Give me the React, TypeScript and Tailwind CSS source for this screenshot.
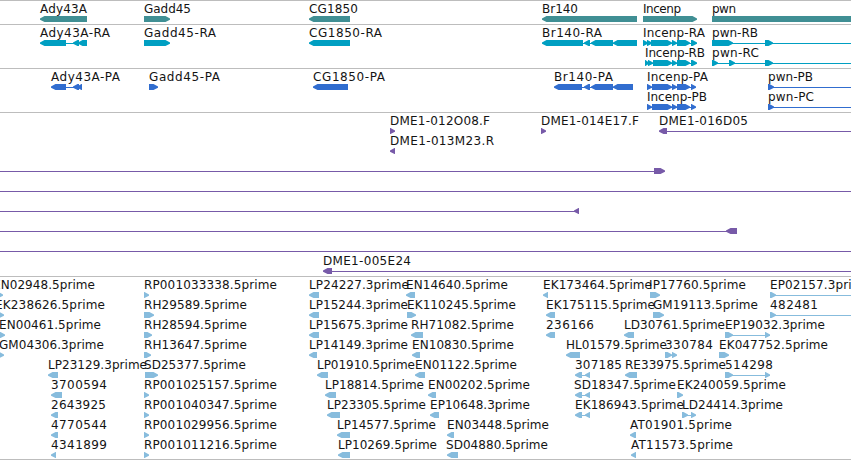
interface Feature {
  label?: string;
  x: number;
  width?: number;
  // exon blocks: [start, end]
  blocks: [number, number][];
  dir: 'L' | 'R' | 'N';
  // connector: [start, end]
  line?: [number, number];
}

interface TrackData {
  id: string;
  color: string;
  height: string;
  rows: Feature[][];
}

const f = (
  label: string,
  x: number,
  width: number,
  dir: Feature['dir'],
  blocks: [number, number][],
  line?: [number, number]
): Feature => ({ label, x, width, dir, blocks, line });

const END = 851;

const tracks: TrackData[] = [
  {
    id: 'genes',
    color: '#408f94',
    height: 'h-6',
    rows: [
      [
        f('Ady43A', 40, 47, 'L', [[40, 87]]),
        f('Gadd45', 144, 47, 'R', [[144, 170]]),
        f('CG1850', 309, 49, 'L', [[309, 350]]),
        f('Br140', 541, 37, 'L', [[542, 637]]),
        f('Incenp', 642, 39, 'R', [[643, 697]]),
        f('pwn', 711, 25, 'N', [[712, 851]]),
      ],
    ],
  },
  {
    id: 'transcripts',
    color: '#009fc2',
    height: 'h-11',
    rows: [
      [
        f('Ady43A-RA', 40, 70, 'L', [[40, 66], [73, 79], [78, 87]], [66, 80]),
        f('Gadd45-RA', 144, 72, 'R', [[144, 170]]),
        f('CG1850-RA', 309, 73, 'L', [[309, 350]]),
        f('Br140-RA', 541, 61, 'L', [[542, 583], [584, 590], [591, 613], [613, 637]], [582, 614]),
        f('Incenp-RA', 642, 63, 'R', [[643, 648], [647, 652], [651, 672], [672, 677], [677, 690], [691, 697]], [643, 694]),
        f('pwn-RB', 711, 47, 'R', [[712, 733], [765, 773]], [712, END]),
      ],
      [
        f('Incenp-RB', 644, 61, 'R', [[645, 649], [648, 653], [653, 672], [672, 677], [677, 690], [691, 697]], [645, 694]),
        f('pwn-RC', 711, 48, 'R', [[712, 718], [729, 735], [765, 773]], [712, END]),
      ],
    ],
  },
  {
    id: 'proteins',
    color: '#316dcf',
    height: 'h-11',
    rows: [
      [
        f('Ady43A-PA', 51, 69, 'L', [[51, 66], [73, 79], [77, 82]], [66, 80]),
        f('Gadd45-PA', 149, 71, 'R', [[149, 158]]),
        f('CG1850-PA', 313, 72, 'L', [[313, 348]]),
        f('Br140-PA', 553, 60, 'L', [[554, 582], [584, 590], [591, 613], [613, 633]], [582, 614]),
        f('Incenp-PA', 646, 62, 'R', [[647, 652], [652, 672], [672, 677], [677, 690], [691, 696]], [647, 694]),
        f('pwn-PB', 767, 46, 'R', [[768, 774]], [768, END]),
      ],
      [
        f('Incenp-PB', 646, 61, 'R', [[647, 652], [652, 672], [672, 677], [677, 690], [691, 696]], [647, 694]),
        f('pwn-PC', 767, 47, 'R', [[768, 774]], [768, END]),
      ],
    ],
  },
  {
    id: 'bacs',
    color: '#775aa8',
    height: 'h-[164px]',
    rows: [
      [
        f('DME1-012O08.F', 389, 101, 'R', [[390, 395]]),
        f('DME1-014E17.F', 540, 99, 'R', [[541, 546]]),
        f('DME1-016D05', 658, 90, 'L', [[659, 667]], [667, END]),
      ],
      [f('DME1-013M23.R', 389, 105, 'L', [[390, 395]])],
      [{ x: 0, dir: 'R', blocks: [[654, 665]], line: [0, 654] }],
      [{ x: 0, dir: 'R', blocks: [], line: [0, END] }],
      [{ x: 0, dir: 'L', blocks: [[574, 579]], line: [0, 576] }],
      [{ x: 0, dir: 'L', blocks: [[726, 737]], line: [0, 728] }],
      [{ x: 0, dir: 'R', blocks: [], line: [0, END] }],
      [f('DME1-005E24', 322, 89, 'L', [[323, 332]], [332, END])],
    ],
  },
  {
    id: 'ests',
    color: '#87bcdd',
    height: 'h-[183px]',
    rows: [
      [
        f('EN02948.5prime', -8, 103, 'R', [[-4, 3]]),
        f('RP001033338.5prime', 143, 134, 'R', [[144, 149]]),
        f('LP24227.3prime', 308, 101, 'L', [[309, 319]]),
        f('EN14640.5prime', 405, 103, 'L', [[406, 415]]),
        f('EK173464.5prime', 542, 110, 'L', [[543, 548]]),
        f('IP17760.5prime', 648, 98, 'R', [[650, 660]]),
        f('EP02157.3prime', 769, 102, 'R', [[770, 776]], [770, END]),
      ],
      [
        f('EK238626.5prime', -6, 111, 'R', [[-4, 4]]),
        f('RH29589.5prime', 143, 104, 'R', [[144, 154]]),
        f('LP15244.3prime', 308, 100, 'L', [[309, 319]]),
        f('EK110245.5prime', 406, 110, 'R', [[407, 416]]),
        f('EK175115.5prime', 545, 110, 'L', [[546, 555]]),
        f('GM19113.5prime', 653, 105, 'R', [[653, 664]]),
        f('482481', 770, 48, 'R', [[770, 776]], [770, END]),
      ],
      [
        f('EN00461.5prime', -2, 103, 'R', [[-4, 5]]),
        f('RH28594.5prime', 143, 104, 'R', [[144, 152]]),
        f('LP15675.3prime', 308, 100, 'L', [[309, 319]]),
        f('RH71082.5prime', 410, 104, 'L', [[411, 423]]),
        f('236166', 546, 48, 'L', [[546, 555]]),
        f('LD30761.5prime', 623, 102, 'L', [[624, 634]]),
        f('EP19032.3prime', 724, 101, 'R', [[725, 733], [765, 770]], [725, 770]),
      ],
      [
        f('GM04306.3prime', -1, 105, 'R', [[-4, 4]]),
        f('RH13647.5prime', 143, 104, 'R', [[144, 151]]),
        f('LP14149.3prime', 308, 100, 'L', [[309, 317]]),
        f('EN10830.5prime', 411, 103, 'L', [[412, 420]]),
        f('HL01579.5prime', 565, 102, 'L', [[566, 580]]),
        f('330784', 665, 48, 'R', [[665, 672], [672, 677]], [665, 675]),
        f('EK047752.5prime', 718, 110, 'R', [[719, 729]]),
      ],
      [
        f('LP23129.3prime', 47, 100, 'L', [[48, 58]]),
        f('SD25377.5prime', 144, 102, 'R', [[145, 158]]),
        f('LP01910.5prime', 316, 99, 'L', [[317, 328]]),
        f('EN01122.5prime', 414, 103, 'L', [[415, 425]]),
        f('307185', 575, 47, 'L', [[575, 582], [585, 590]], [580, 587]),
        f('RE33975.5prime', 624, 102, 'L', [[625, 637]]),
        f('514298', 725, 48, 'R', [[725, 733], [765, 770]], [725, 770]),
      ],
      [
        f('3700594', 51, 56, 'L', [[51, 62]]),
        f('RP001025157.5prime', 143, 134, 'R', [[144, 149]]),
        f('LP18814.5prime', 324, 100, 'L', [[325, 336]]),
        f('EN00202.5prime', 427, 103, 'L', [[428, 436]]),
        f('SD18347.5prime', 574, 102, 'L', [[575, 582], [585, 590]], [580, 587]),
        f('EK240059.5prime', 676, 110, 'R', [[677, 683]]),
      ],
      [
        f('2643925', 51, 55, 'L', [[51, 58]]),
        f('RP001040347.5prime', 143, 134, 'R', [[144, 149]]),
        f('LP23305.5prime', 326, 100, 'L', [[327, 340]]),
        f('EP10648.3prime', 429, 101, 'L', [[430, 439]]),
        f('EK186943.5prime', 574, 110, 'L', [[575, 582], [585, 590]], [580, 587]),
        f('LD24414.3prime', 681, 102, 'R', [[682, 688], [691, 696]], [682, 694]),
      ],
      [
        f('4770544', 51, 56, 'L', [[51, 58]]),
        f('RP001029956.5prime', 143, 134, 'R', [[144, 149]]),
        f('LP14577.5prime', 336, 100, 'L', [[337, 350]]),
        f('EN03448.5prime', 446, 103, 'L', [[447, 454]]),
        f('AT01901.5prime', 630, 102, 'L', [[630, 636]]),
      ],
      [
        f('4341899', 51, 56, 'L', [[51, 56]]),
        f('RP001011216.5prime', 143, 134, 'R', [[144, 149]]),
        f('LP10269.5prime', 337, 100, 'L', [[338, 350]]),
        f('SD04880.5prime', 446, 102, 'L', [[447, 458]]),
        f('AT11573.5prime', 631, 102, 'L', [[631, 636]]),
      ],
    ],
  },
];

const TOP = 15;
const BOTTOM = 21;
const MID = 18;

// Arrow heads have a slightly blunt tip so that short features stay visible
function blockPoints(start: number, end: number, dir: Feature['dir']) {
  const head = Math.min(5, end - start);
  if (dir === 'L') {
    const neck = start + head;
    return `${start},${MID - 0.5} ${neck - 0.5},${TOP} ${end},${TOP} ${end},${BOTTOM} ${neck - 0.5},${BOTTOM} ${start},${MID + 0.7}`;
  }
  if (dir === 'R') {
    const neck = end - head;
    return `${start},${TOP} ${neck + 0.5},${TOP} ${end},${MID - 0.5} ${end},${MID + 0.7} ${neck + 0.5},${BOTTOM} ${start},${BOTTOM}`;
  }
  return `${start},${TOP} ${end},${TOP} ${end},${BOTTOM} ${start},${BOTTOM}`;
}

// Labels that open with a straight stem are inset by one pixel
const STEM = /^[BDEHILMNPRp]/;

function FeatureGlyph({ feature }: { feature: Feature }) {
  const { label, x, width = 0, blocks, dir, line } = feature;
  const inset = label && STEM.test(label) ? 1 : 0;

  return (
    <g>
      {line && <rect x={line[0]} y={MID} width={line[1] - line[0]} height={1} />}
      {blocks.map(([start, end], i) => (
        <polygon key={i} points={blockPoints(start, end, dir)} />
      ))}
      {label && (
        <text x={x + inset} y={12} textLength={width - inset} className="fill-[#141414]">
          {label}
        </text>
      )}
    </g>
  );
}

function Track({ track }: { track: TrackData }) {
  return (
    <section className={`flex flex-col shrink-0 border-t border-[#bdbdbd] ${track.height}`}>
      {track.rows.map((row, i) => (
        <svg key={i} width={851} height={20} fill={track.color} className="block shrink-0 overflow-visible">
          {row.map((feature, j) => (
            <FeatureGlyph key={j} feature={feature} />
          ))}
        </svg>
      ))}
    </section>
  );
}

export default function App() {
  return (
    <div className="flex flex-col w-[851px] h-[460px] overflow-hidden bg-white border-b border-[#bdbdbd] text-[12px] font-['DejaVu_Sans',sans-serif]">
      {tracks.map((track) => (
        <Track key={track.id} track={track} />
      ))}
    </div>
  );
}
